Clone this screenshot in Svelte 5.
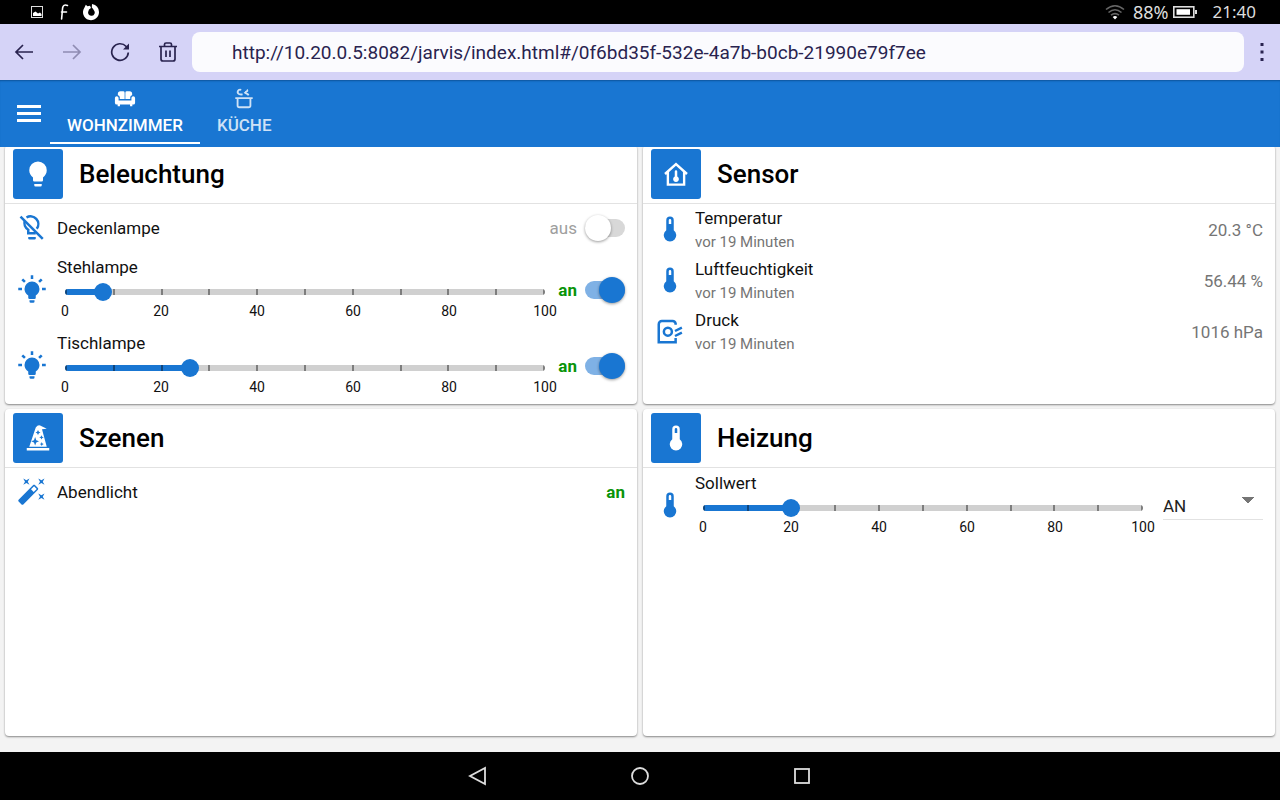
<script>
  let lamps = $state([
    { id: 'decke', name: 'Deckenlampe', on: false },
    { id: 'steh', name: 'Stehlampe', on: true, level: 8 },
    { id: 'tisch', name: 'Tischlampe', on: true, level: 26 }
  ]);
  const sensors = [
    { name: 'Temperatur', age: 'vor 19 Minuten', value: '20.3 °C', icon: 'thermo' },
    { name: 'Luftfeuchtigkeit', age: 'vor 19 Minuten', value: '56.44 %', icon: 'thermo' },
    { name: 'Druck', age: 'vor 19 Minuten', value: '1016 hPa', icon: 'gauge' }
  ];
  let target = $state(20);
  let url = $state('http://10.20.0.5:8082/jarvis/index.html#/0f6bd35f-532e-4a7b-b0cb-21990e79f7ee');
  const ticks = Array.from({ length: 11 }, (_, i) => i);
  const marks = [0, 20, 40, 60, 80, 100];
</script>

{#snippet icon(name)}
  <svg class="icon" viewBox="0 0 24 24" aria-hidden="true">
    {#if name === 'bulb'}
      <path d="M12,2A7,7 0 0,0 5,9C5,11.38 6.19,13.47 8,14.74V17A1,1 0 0,0 9,18H15A1,1 0 0,0 16,17V14.74C17.81,13.47 19,11.38 19,9A7,7 0 0,0 12,2M9,21A1,1 0 0,0 10,22H14A1,1 0 0,0 15,21V20H9V21Z" />
    {:else if name === 'bulb-on'}
      <path d="M12,6A6,6 0 0,1 18,12C18,14.22 16.79,16.16 15,17.2V19A1,1 0 0,1 14,20H10A1,1 0 0,1 9,19V17.2C7.21,16.16 6,14.22 6,12A6,6 0 0,1 12,6M14,21V22A1,1 0 0,1 13,23H11A1,1 0 0,1 10,22V21H14M20,11H23V13H20V11M1,11H4V13H1V11M13,1V4H11V1H13M4.92,3.5L7.05,5.64L5.63,7.05L3.5,4.93L4.92,3.5M16.95,5.63L19.07,3.5L20.5,4.93L18.37,7.05L16.95,5.63Z" />
    {:else if name === 'bulb-off'}
      <g fill="none" stroke="currentColor" stroke-width="2">
        <path d="M7.6 4.4A6.2 6.2 0 0 1 15.8 13.4" />
        <path d="M6.2 7A6.2 6.2 0 0 0 9 14.2V17H15" />
        <path d="M2.8 3.7L20.6 21.5" />
      </g>
      <path d="M9 20H15V21A1 1 0 0 1 14 22H10A1 1 0 0 1 9 21Z" />
    {:else if name === 'thermo'}
      <path fill-rule="evenodd" d="M15 13V5A3 3 0 0 0 9 5V13A5 5 0 1 0 15 13M12 4A1 1 0 0 1 13 5V8H11V5A1 1 0 0 1 12 4Z" />
    {:else if name === 'gauge'}
      <g fill="none" stroke="currentColor" stroke-width="2">
        <path d="M16.500 7V6A2.500 2.500 0 0 0 14 4H5.500A2.500 2.500 0 0 0 3 6.500V21H16.500V17.500" />
        <circle cx="10.300" cy="12.500" r="3.200" />
        <path d="M16 12L21.500 9.300M16 16L21.500 13.300" />
      </g>
    {:else if name === 'home'}
      <path d="M3.200 12L12 4L20.800 12M5.500 10.500V20.500H18.500V10.500" fill="none" stroke="currentColor" stroke-width="1.900" />
      <path d="M13 14V10A1 1 0 0 0 11 10V14A2.300 2.300 0 1 0 13 14Z" />
    {:else if name === 'hat'}
      <path fill-rule="evenodd" d="M3 20H21V22H3ZM5 19L10.200 3.500Q12 1.200 13.700 2L19 4.500L15.200 5L19 19ZM12 5.500L11.300 7L10 7.500L11.300 8.200L12 9.500L12.700 8.200L14 7.500L12.700 7ZM14.800 9.800L14.200 11L13 11.500L14.200 12L14.800 13.200L15.400 12L16.600 11.500L15.400 11ZM9.700 11.200L8.800 13.700L6.600 14.600L8.800 15.500L9.700 18L10.600 15.500L12.800 14.600L10.600 13.700ZM15 15.200L14.500 16.300L13.400 16.800L14.500 17.300L15 18.400L15.500 17.300L16.600 16.800L15.500 16.300Z" />
    {:else if name === 'wand'}
      <path fill-rule="evenodd" d="M7.500,5.600L5,7L6.400,4.500L5,2L7.500,3.400L10,2L8.600,4.500L10,7L7.500,5.600M19.500,15.400L22,14L20.600,16.500L22,19L19.500,17.600L17,19L18.400,16.500L17,14L19.500,15.400M22,2L20.600,4.500L22,7L19.500,5.600L17,7L18.400,4.500L17,2L19.500,3.400L22,2M13.340,12.780L15.780,10.340L13.660,8.220L11.220,10.660L13.340,12.780M14.370,7.290L16.710,9.630C17.100,10 17.100,10.650 16.710,11.040L5.040,22.710C4.650,23.100 4,23.100 3.630,22.710L1.290,20.370C0.900,20 0.900,19.350 1.290,18.960L12.960,7.290C13.350,6.900 14,6.900 14.370,7.290Z" />
    {:else if name === 'sofa'}
      <path d="M7 3.500H10A1.600 1.600 0 0 1 11.600 5.100V12H6.300V9.800A3 3 0 0 0 4.200 7.900V6.300A2.800 2.800 0 0 1 7 3.500ZM14 3.500H17A2.800 2.800 0 0 1 19.800 6.300V7.900A3 3 0 0 0 17.700 9.800V12H12.400V5.100A1.600 1.600 0 0 1 14 3.500ZM3 9A2 2 0 0 1 5 11V13.500H19V11A2 2 0 1 1 23 11V16A2 2 0 0 1 21 18H20V20H17.500V18H6.500V20H4V18H3A2 2 0 0 1 1 16V11A2 2 0 0 1 3 9Z" />
    {:else if name === 'pot'}
      <g fill="none" stroke="currentColor" stroke-width="2">
        <path d="M2.500 11H21.500M5 11V19A2 2 0 0 0 7 21H17A2 2 0 0 0 19 19V11" />
        <path d="M9 2C5 1 4 5 6.500 6.500Q8 7.300 10.500 7M15 2C17 3 14 4.500 13 4.500M12.500 4.500C14 7 16 5.500 17 8" />
      </g>
    {/if}
  </svg>
{/snippet}

{#snippet slider(id, value, setValue)}
  <div class="slider">
    <div class="track">
      <div class="fill" style="width: {value}%"></div>
      <div class="ticks">
        {#each ticks as t (t)}<i></i>{/each}
      </div>
    </div>
    <input {id} type="range" min="0" max="100" {value} oninput={(e) => setValue(+e.currentTarget.value)} />
    <div class="marks">
      {#each marks as m (m)}<span>{m}</span>{/each}
    </div>
  </div>
{/snippet}

<div class="screen">
  <header class="status">
    <svg width="14" height="14" viewBox="0 0 14 14" class="picture" aria-hidden="true">
      <rect x="1.500" y="1.500" width="11" height="11" fill="none" stroke="#ddd" />
      <path d="M3 11V8L5.500 6.500L8 8.500L10 7.500L11.500 9V11Z" fill="#fff" />
    </svg>
    <svg width="10" height="18" viewBox="0 0 10 18" class="script" aria-hidden="true">
      <path d="M8.500 2.500C5.500 1.200 4 2.500 3.600 5L2.600 16M2.500 9H7.500" fill="none" stroke="#fff" stroke-width="1.600" stroke-linecap="round" />
    </svg>
    <svg width="18" height="18" viewBox="0 0 18 18" aria-hidden="true">
      <path fill-rule="evenodd" fill="#fff" d="M2.500 4.500L3.800 1.800L5.500 3.300L8 2.800L9 5L7 6.500L6.300 8.500A3.300 3.300 0 1 0 12 7.500Q11 5.500 9.800 4.600L10 1Q16.800 2.500 17 9A8 8 0 1 1 2.500 4.500Z" />
    </svg>
    <div class="spacer"></div>
    <svg width="20" height="16" viewBox="0 0 20 16" aria-hidden="true">
      <g fill="none" stroke="#666" stroke-width="1.600">
        <path d="M1 5.500Q10-2 19 5.500M3.500 8.500Q10 3 16.500 8.500M6 11.200Q10 8 14 11.200" />
      </g>
      <path d="M10 15.500L7.700 13Q10 11 12.300 13Z" fill="#fff" />
    </svg>
    <span class="percent">88%</span>
    <svg width="24" height="12" viewBox="0 0 24 12" aria-hidden="true">
      <rect x=".8" y=".8" width="20" height="10.400" fill="none" stroke="#ddd" stroke-width="1.600" />
      <rect x="3.500" y="3.200" width="13.500" height="5.600" fill="#fff" />
      <rect x="22" y="4" width="2" height="4" fill="#ddd" />
    </svg>
    <time>21:40</time>
  </header>

  <div class="browser">
    <button aria-label="Zurück">
      <svg width="20" height="20" viewBox="0 0 20 20"><path d="M19 10H2M9 3L2 10L9 17" /></svg>
    </button>
    <button aria-label="Vorwärts" class="faded">
      <svg width="20" height="20" viewBox="0 0 20 20"><path d="M1 10H18M11 3L18 10L11 17" /></svg>
    </button>
    <button aria-label="Neu laden">
      <svg width="20" height="20" viewBox="0 0 20 20"><path d="M18.300 10.500A8.300 8.300 0 1 1 16.200 4.500L17.500 6" /><path d="M19 1.500V7.500H13Z" class="solid" /></svg>
    </button>
    <button aria-label="Daten löschen">
      <svg width="20" height="20" viewBox="0 0 20 20"><path d="M1 4.500H19M6.500 4.500V2.500A1.500 1.500 0 0 1 8 1H12A1.500 1.500 0 0 1 13.500 2.500V4.500M3 4.500V17A2 2 0 0 0 5 19H15A2 2 0 0 0 17 17V4.500M8 8.500V15M12 8.500V15" /></svg>
    </button>
    <input type="text" aria-label="Adresse" bind:value={url} />
    <button aria-label="Menü" class="more">
      <svg width="4" height="20" viewBox="0 0 4 20"><path d="M.5 1H3.500V4H.5ZM.5 8.500H3.500V11.500H.5ZM.5 16H3.500V19H.5Z" class="solid" /></svg>
    </button>
  </div>

  <nav class="appbar">
    <button aria-label="Navigation" class="burger"><i></i><i></i><i></i></button>
    <a href="#wohnzimmer" class="tab active" aria-current="page">{@render icon('sofa')}<span>WOHNZIMMER</span></a>
    <a href="#kueche" class="tab">{@render icon('pot')}<span>KÜCHE</span></a>
  </nav>

  <main>
    <section class="card">
      <h2><span class="tile">{@render icon('bulb')}</span>Beleuchtung</h2>
      {#each lamps as lamp (lamp.id)}
        <div class="row" class:tall={lamp.level !== undefined}>
          {@render icon(lamp.on ? 'bulb-on' : 'bulb-off')}
          <div class="body">
            {#if lamp.level !== undefined}
              <label for="{lamp.id}-level">{lamp.name}</label>
              {@render slider(`${lamp.id}-level`, lamp.level, (v) => (lamp.level = v))}
            {:else}
              <label for="{lamp.id}-switch">{lamp.name}</label>
            {/if}
          </div>
          <span class="state" class:on={lamp.on}>{lamp.on ? 'an' : 'aus'}</span>
          <input id="{lamp.id}-switch" class="switch" type="checkbox" role="switch" aria-label={lamp.name} bind:checked={lamp.on} />
        </div>
      {/each}
    </section>

    <section class="card">
      <h2><span class="tile">{@render icon('home')}</span>Sensor</h2>
      {#each sensors as s (s.name)}
        <div class="row sensor">
          {@render icon(s.icon)}
          <div class="body">
            <div class="name">{s.name}</div>
            <div class="age">{s.age}</div>
          </div>
          <span class="value">{s.value}</span>
        </div>
      {/each}
    </section>

    <section class="card">
      <h2><span class="tile">{@render icon('hat')}</span>Szenen</h2>
      <div class="row">
        {@render icon('wand')}
        <div class="body">Abendlicht</div>
        <span class="state on">an</span>
      </div>
    </section>

    <section class="card">
      <h2><span class="tile">{@render icon('thermo')}</span>Heizung</h2>
      <div class="row tall">
        {@render icon('thermo')}
        <div class="body">
          <label for="target">Sollwert</label>
          {@render slider('target', target, (v) => (target = v))}
        </div>
        <select aria-label="Betriebsart">
          <option>AN</option>
          <option>AUS</option>
        </select>
      </div>
    </section>
  </main>

  <footer>
    <button aria-label="Zurück">
      <svg width="20" height="20" viewBox="0 0 20 20"><path d="M17 2V18L2 10Z" /></svg>
    </button>
    <button aria-label="Startseite">
      <svg width="20" height="20" viewBox="0 0 20 20"><circle cx="10" cy="10" r="8" /></svg>
    </button>
    <button aria-label="Letzte Apps">
      <svg width="20" height="20" viewBox="0 0 20 20"><rect x="3" y="3" width="14" height="14" /></svg>
    </button>
  </footer>
</div>

<style>
  :global(body) {
    margin: 0;
    background: #f3f3f3;
  }
  .screen {
    display: flex;
    flex-direction: column;
    min-height: 100vh;
    font-family: Roboto, 'Liberation Sans', sans-serif;
    font-size: 17px;
    line-height: 24px;
    color: #111;
  }
  .screen :global(*) {
    box-sizing: border-box;
  }
  button {
    padding: 0;
    border: 0;
    background: none;
    color: inherit;
    font: inherit;
  }
  .icon {
    display: block;
    flex: none;
    width: 30px;
    height: 30px;
    fill: currentColor;
  }

  .status {
    display: flex;
    align-items: center;
    height: 24px;
    padding: 0 24px 0 30px;
    background: #000;
    color: #ddd;
    font-family: 'Noto Sans', sans-serif;
  }
  .picture {
    margin-right: 15px;
  }
  .script {
    margin-right: 13px;
  }
  .spacer {
    flex: 1;
  }
  .percent {
    margin: 0 4px 0 8px;
    font-size: 18px;
  }
  time {
    margin-left: 16px;
    font-size: 17px;
  }

  .browser {
    display: flex;
    align-items: center;
    height: 56px;
    background: #d5d3f7;
    color: #29234f;
  }
  .browser button {
    display: flex;
    justify-content: center;
    width: 48px;
  }
  .browser button.more {
    width: 36px;
  }
  .browser svg {
    fill: none;
    stroke: currentColor;
    stroke-width: 1.7;
  }
  .browser .solid {
    fill: currentColor;
    stroke: none;
  }
  .browser .faded {
    opacity: 0.4;
  }
  .browser input {
    flex: 1;
    min-width: 0;
    height: 40px;
    padding: 0 40px;
    border: 0;
    border-radius: 8px;
    background: #fbfbfe;
    color: #29234f;
    font: inherit;
    font-size: 19px;
  }

  .appbar {
    position: relative;
    z-index: 1;
    display: flex;
    height: 67px;
    padding: 0 8px 3px;
    background: #1976d2;
    box-shadow: inset 0 2px 2px -1px #0d539b;
    color: #fff;
  }
  .burger {
    display: flex;
    flex-direction: column;
    justify-content: center;
    align-items: center;
    gap: 4px;
    width: 42px;
    padding-top: 2px;
  }
  .burger i {
    width: 24px;
    height: 3px;
    background: #fff;
  }
  .tab {
    display: flex;
    flex-direction: column;
    align-items: center;
    padding: 8px 17px 0;
    border-bottom: 2px solid transparent;
    color: #cfe2f6;
    font-size: 17px;
    font-weight: 500;
    text-decoration: none;
  }
  .tab .icon {
    width: 22px;
    height: 22px;
    margin-bottom: 3px;
  }
  .tab.active {
    border-color: #fff;
    color: #fff;
  }

  main {
    display: grid;
    flex: 1;
    grid-template-columns: 1fr 1fr;
    grid-template-rows: auto 1fr;
    gap: 5px 6px;
    margin-top: -2px;
    padding: 0 5px 16px;
  }
  .card {
    border-radius: 4px;
    background: #fff;
    box-shadow: 0 1px 2px rgb(0 0 0 / 45%);
  }
  h2 {
    display: flex;
    align-items: center;
    gap: 16px;
    margin: 0;
    padding: 4px 8px;
    border-bottom: 1px solid #e2e2e2;
    color: #000;
    font-size: 26px;
    font-weight: 500;
  }
  .tile {
    display: grid;
    place-items: center;
    width: 50px;
    height: 50px;
    border-radius: 3px;
    background: #1976d2;
    color: #fff;
  }
  .row {
    display: flex;
    align-items: center;
    min-height: 48px;
    padding: 0 12px;
  }
  .row > .icon {
    margin: 0 10px 2px 0;
    color: #1976d2;
  }
  .tall {
    min-height: 76px;
  }
  .tall .body {
    padding-bottom: 8px;
  }
  .sensor {
    min-height: 51px;
  }
  .body {
    flex: 1;
    min-width: 0;
  }
  .body label {
    display: block;
  }
  .age {
    color: #757575;
    font-size: 15px;
  }
  .value {
    color: #757575;
  }
  .state {
    min-width: 24px;
    color: #9e9e9e;
    text-align: right;
  }
  .state.on {
    color: #099409;
    font-weight: 700;
  }

  .slider {
    display: grid;
    margin: 0 8px;
  }
  .track {
    display: grid;
    grid-area: 1 / 1;
    align-self: center;
    height: 6px;
    border-radius: 3px;
    background: #d0d0d0;
    overflow: hidden;
  }
  .fill,
  .ticks {
    grid-area: 1 / 1;
  }
  .fill {
    background: #1976d2;
  }
  .ticks {
    display: flex;
    justify-content: space-between;
  }
  .ticks i {
    width: 2px;
    background: rgb(0 0 0 / 40%);
  }
  .slider input {
    grid-area: 1 / 1;
    height: 26px;
    margin: 0 -9px;
    appearance: none;
    background: none;
  }
  .slider input::-webkit-slider-thumb {
    width: 18px;
    height: 18px;
    border-radius: 50%;
    appearance: none;
    background: #1976d2;
  }
  .marks {
    display: flex;
    justify-content: space-between;
    font-size: 14px;
    line-height: 12px;
  }
  .marks span {
    display: flex;
    justify-content: center;
    width: 0;
  }

  .switch {
    flex: none;
    width: 40px;
    height: 18px;
    margin: 0 0 0 8px;
    border-radius: 9px;
    appearance: none;
    background: #d8d8d8;
  }
  .switch::before {
    content: '';
    display: block;
    width: 26px;
    height: 26px;
    margin-top: -4px;
    border-radius: 50%;
    background: #fff;
    box-shadow: 0 1px 3px rgb(0 0 0 / 40%);
  }
  .switch:checked {
    background: #7fb1e5;
  }
  .switch:checked::before {
    margin-left: 14px;
    background: #1976d2;
  }

  select {
    width: 100px;
    height: 28px;
    margin-left: 12px;
    padding: 0;
    border: 0;
    border-bottom: 1px solid #e2e2e2;
    appearance: none;
    background: linear-gradient(to bottom right, #757575 50%, transparent 52%) right 9px top 5px / 6px 6px no-repeat,
      linear-gradient(to bottom left, #757575 50%, transparent 52%) right 15px top 5px / 6px 6px no-repeat;
    color: #222;
    font: inherit;
  }

  footer {
    display: flex;
    justify-content: center;
    align-items: center;
    gap: 142px;
    height: 48px;
    background: #000;
    color: #ddd;
  }
  footer button {
    display: flex;
  }
  footer svg {
    fill: none;
    stroke: currentColor;
    stroke-width: 1.8;
  }
</style>
